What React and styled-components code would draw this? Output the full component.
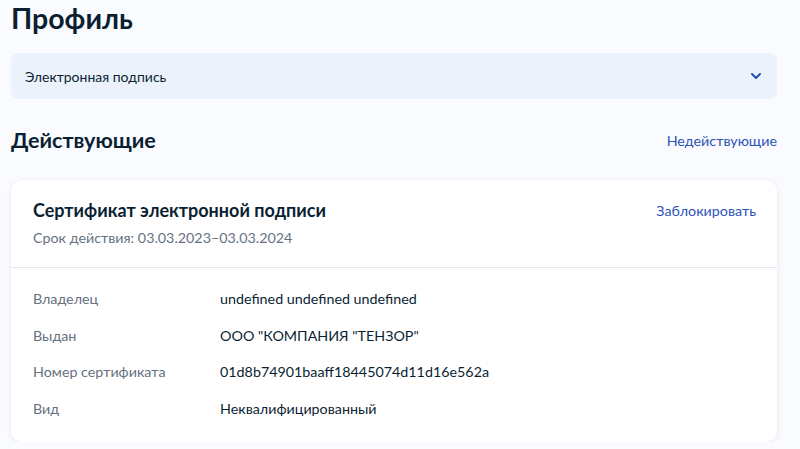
import React from 'react';
import styled, { createGlobalStyle } from 'styled-components';

const GlobalStyle = createGlobalStyle`
  body {
    margin: 0;
    background: #f9fbfe;
    font-family: Lato, "Noto Sans", sans-serif;
    color: #0b1f33;
  }
`;

const Page = styled.div`
  padding: 0 23px 0 11px;
`;

const PageTitle = styled.h1`
  margin: 0;
  font-size: 28.5px;
  line-height: 36px;
  font-weight: 700;
  color: #0b1f33;
`;

const Select = styled.div`
  margin-top: 17px;
  height: 46px;
  display: flex;
  align-items: center;
  justify-content: space-between;
  padding: 0 14px;
  background: #ecf2fc;
  border-radius: 8px;
  font-size: 14px;
  color: #0b1f33;
`;

const Section = styled.div`
  margin-top: 27px;
  display: flex;
  align-items: center;
  justify-content: space-between;
`;

const SectionTitle = styled.h2`
  margin: 0;
  font-size: 21.6px;
  line-height: 28px;
  font-weight: 700;
`;

const Link = styled.a`
  font-size: 14.3px;
  color: #2d53b8;
  cursor: pointer;
`;

const Card = styled.div`
  margin-top: 26px;
  background: #fff;
  border-radius: 12px;
  box-shadow: 0 1px 6px rgba(11, 31, 51, 0.08);
`;

const CardHead = styled.div`
  padding: 19px 21px 20px 22px;
  display: flex;
  justify-content: space-between;
  align-items: flex-start;
  border-bottom: 1px solid #e3e8ee;
`;

const CardTitle = styled.div`
  font-size: 18px;
  line-height: 22px;
  font-weight: 700;
`;

const CardSub = styled.div`
  margin-top: 8px;
  font-size: 14.3px;
  line-height: 18px;
  color: #66727f;
`;

const HeadLink = styled(Link)`
  margin-top: 3px;
`;

const Rows = styled.div`
  padding: 22px 22px 24px;
  display: flex;
  flex-direction: column;
  gap: 18.5px;
`;

const Row = styled.div`
  display: grid;
  grid-template-columns: 187px 1fr;
  font-size: 14.3px;
  line-height: 18px;
`;

const Label = styled.span`
  color: #66727f;
`;

const Value = styled.span`
  color: #0b1f33;
`;

const Chevron = () => (
  <svg width="14" height="14" viewBox="0 0 14 14" fill="none">
    <path d="M3 5l4 4 4-4" stroke="#2450b0" strokeWidth="2" strokeLinecap="round" strokeLinejoin="round" />
  </svg>
);

const rows = [
  ['Владелец', 'undefined undefined undefined'],
  ['Выдан', 'ООО "КОМПАНИЯ "ТЕНЗОР"'],
  ['Номер сертификата', '01d8b74901baaff18445074d11d16e562a'],
  ['Вид', 'Неквалифицированный'],
];

export default function App() {
  return (
    <Page>
      <GlobalStyle />
      <PageTitle>Профиль</PageTitle>
      <Select>
        <span>Электронная подпись</span>
        <Chevron />
      </Select>
      <Section>
        <SectionTitle>Действующие</SectionTitle>
        <Link>Недействующие</Link>
      </Section>
      <Card>
        <CardHead>
          <div>
            <CardTitle>Сертификат электронной подписи</CardTitle>
            <CardSub>Срок действия: 03.03.2023–03.03.2024</CardSub>
          </div>
          <HeadLink>Заблокировать</HeadLink>
        </CardHead>
        <Rows>
          {rows.map(([k, v]) => (
            <Row key={k}>
              <Label>{k}</Label>
              <Value>{v}</Value>
            </Row>
          ))}
        </Rows>
      </Card>
    </Page>
  );
}
